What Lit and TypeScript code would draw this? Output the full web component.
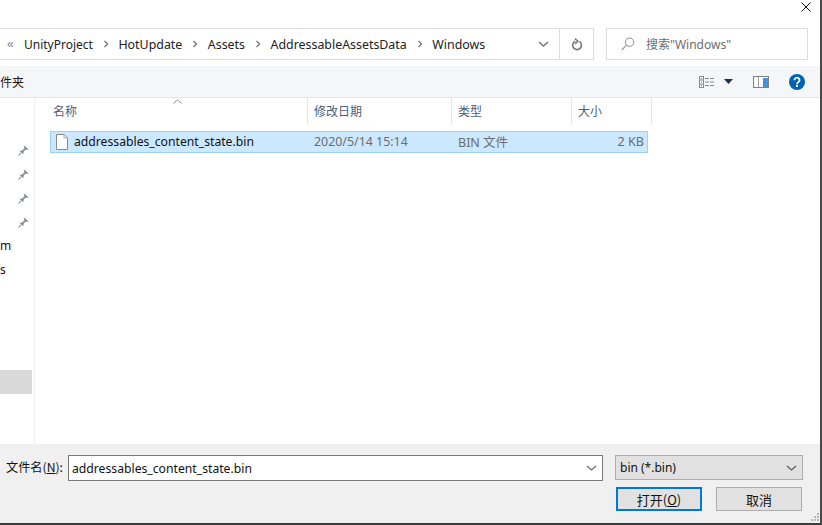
import { LitElement, html, css, svg } from "lit";
import { customElement } from "lit/decorators.js";

const chev = svg`<svg class="crumbsep" width="6" height="8" viewBox="0 0 6 8"><path d="M1.5 1 L4.5 4 L1.5 7" fill="none" stroke="#7f7f7f" stroke-width="1.5"/></svg>`;
const down = (c: string, w = 1.2) => svg`<svg width="11" height="6" viewBox="0 0 11 6"><path d="M1 1 L5.5 5 L10 1" fill="none" stroke="${c}" stroke-width="${w}"/></svg>`;
const pin = svg`<svg width="11" height="11" viewBox="0 0 11 11"><path d="M6.5 0.5 L10.5 4.5 L9.3 5 L7.8 4.6 L5.6 6.8 L5.6 8.6 L4.8 9 L2 6.2 L2.4 5.4 L4.2 5.4 L6.4 3.2 L6 1.7 Z" fill="#8a9096"/><path d="M3.2 7.8 L0.6 10.4" stroke="#8a9096" stroke-width="1.2"/></svg>`;

@customElement("app-root")
export class AppRoot extends LitElement {
  static styles = css`
    :host { display: block; width: 822px; height: 525px; font-family: "Liberation Sans", "Noto Sans CJK SC", sans-serif; font-size: 12px; color: #1a1a1a; background: #fff; overflow: hidden; }
    .win { position: relative; width: 822px; height: 525px; display: flex; flex-direction: column; box-sizing: border-box; border-right: 2px solid #4a4a4a; border-bottom: 2px solid #3a3a3a; }
    .title { height: 28px; flex: none; display: flex; justify-content: flex-end; align-items: flex-start; padding: 2px 9px 0 0; box-sizing: border-box; }
    .addr { height: 32px; flex: none; display: flex; align-items: stretch; }
    .path { width: 560px; box-sizing: border-box; border: 1px solid #dcdcdc; border-left: none; display: flex; align-items: center; padding-left: 7px; color: #222; }
    .path .lt { color: #808080; font-size: 12px; margin-right: 6px; width: 11px; }
    .crumb { white-space: nowrap; font-family: "Noto Sans", sans-serif; font-size: 12.4px; }
    .lt + .crumb { font-size: 12px; }
    .crumbsep { margin: 0 9.75px; flex: none; }
    .pdrop { margin-left: auto; margin-right: 10px; display: flex; }
    .refresh { width: 34px; box-sizing: border-box; border: 1px solid #dcdcdc; border-left: none; display: flex; align-items: center; justify-content: center; }
    .search { margin-left: 12px; width: 202px; box-sizing: border-box; border: 1px solid #dcdcdc; display: flex; align-items: center; padding-left: 14px; font-size: 12px; color: #6d6d6d; gap: 11px; }
    .search span { font-family: "Noto Sans", "Noto Sans CJK SC", sans-serif; white-space: nowrap; }
    .tools { margin-top: 6px; height: 32px; flex: none; background: #f5f6f7; border-bottom: 1px solid #e6e6e6; box-sizing: border-box; display: flex; align-items: center; position: relative; }
    .newf { font-family: "Noto Sans CJK SC", sans-serif; font-size: 12px; margin-left: -12px; margin-top: -1px; white-space: nowrap; }
    .ticons { margin-left: auto; display: flex; align-items: center; margin-right: 15px; }
    .main { flex: 1; display: flex; min-height: 0; }
    .side { width: 35px; flex: none; box-sizing: border-box; border-right: 1px solid #f0f0f0; position: relative; display: flex; flex-direction: column; align-items: flex-end; }
    .pins { display: flex; flex-direction: column; gap: 13px; margin-top: 47px; padding-right: 5px; }
    .pins svg { display: block; }
    .cut { font-family: "Noto Sans", sans-serif; font-size: 12px; align-self: flex-start; height: 24px; line-height: 24px; white-space: nowrap; }
    .cuts { margin-top: 6px; display: flex; flex-direction: column; width: 100%; color: #1a0a20; }
    .hl { position: absolute; left: 0; top: 272px; width: 32px; height: 24px; background: #d9d9d9; }
    .list { flex: 1; display: flex; flex-direction: column; min-width: 0; }
    .heads { display: flex; height: 27px; flex: none; color: #4c607a; font-family: "Noto Sans CJK SC", sans-serif; font-size: 12px; position: relative; }
    .h { box-sizing: border-box; border-right: 1px solid #e5e5e5; padding-left: 6px; line-height: 26px; flex: none; }
    .h.first { width: 273px; padding-left: 18px; }
    .h.date { width: 144px; }
    .h.kind { width: 120px; }
    .h.size { width: 80px; }
    .sort { position: absolute; left: 138px; top: 1px; display: block; }
    .row { margin: 6px 0 0 15px; width: 598px; height: 22px; box-sizing: border-box; border: 1px solid #99d1ff; background: #cce8ff; display: flex; align-items: center; flex: none; padding-bottom: 1px; }
    .name { margin-left: 5px; color: #111; width: 258px; font-family: "Noto Sans", sans-serif; font-size: 12.2px; white-space: nowrap; flex: none; display: flex; gap: 6px; align-items: center; }
    .name svg { flex: none; }
    .c { color: #6d6d6d; font-family: "Noto Sans", "Noto Sans CJK SC", sans-serif; white-space: nowrap; flex: none; }
    .c.date { width: 144px; font-size: 12.4px; }
    .c.kind { width: 120px; font-size: 12.5px; }
    .c.size { width: 66px; font-size: 12.6px; text-align: right; }
    .foot { height: 79px; flex: none; background: #f0f0f0; position: relative; display: grid; grid-template-columns: 68px 535px 1fr; grid-template-rows: 25px 24px; row-gap: 7px; padding: 11px 0 0 0; box-sizing: border-box; }
    .lbl { font-family: "Noto Sans CJK SC", sans-serif; padding-left: 6px; line-height: 25px; font-size: 12.2px; white-space: nowrap; color: #111; }
    u { text-underline-offset: 1px; }
    .input { width: 535px; box-sizing: border-box; height: 26px; border: 1px solid #7a7a7a; background: #fff; display: flex; align-items: center; padding-left: 3px; font-family: "Noto Sans", sans-serif; font-size: 12.2px; color: #111; }
    .input svg { margin-left: auto; margin-right: 5px; }
    .type { margin-left: 12px; width: 188px; height: 25px; box-sizing: border-box; border: 1px solid #adadad; background: #e1e1e1; display: flex; align-items: center; padding-left: 4px; font-family: "Noto Sans", sans-serif; font-size: 12px; color: #111; }
    .type svg { margin-left: auto; margin-right: 5px; }
    .btns { grid-column: 3; display: flex; gap: 14px; margin-left: 13px; }
    .btn { width: 86px; height: 24px; flex: none; box-sizing: border-box; background: #e1e1e1; border: 1px solid #adadad; display: flex; align-items: center; justify-content: center; font-family: "Noto Sans CJK SC", sans-serif; font-size: 13px; color: #111; }
    .btn.def { border: 2px solid #0078d7; }
    .grip { position: absolute; right: 0; bottom: 1px; }
    .sp-view { margin-right: 9px; }
    .sp-caret { margin-right: 20px; }
    .sp-pane { margin-right: 20px; }
  `;

  render() {
    const crumbs = ["UnityProject", "HotUpdate", "Assets", "AddressableAssetsData"];
    return html`<div class="win">
      <div class="title">
        <svg width="10" height="10" viewBox="0 0 10 10"><path d="M0.5 0.5 L9.5 9.5 M9.5 0.5 L0.5 9.5" stroke="#111" stroke-width="1"/></svg>
      </div>
      <div class="addr">
        <div class="path">
          <span class="lt">«</span>
          ${crumbs.map((c) => html`<span class="crumb">${c}</span>${chev}`)}
          <span class="crumb">Windows</span>
          <span class="pdrop">${down("#7a7a7a", 1.6)}</span>
        </div>
        <div class="refresh">
          <svg width="12" height="13" viewBox="0 0 12 13"><path d="M8.2 3.4 A4.4 4.4 0 1 1 4.2 3.2" fill="none" stroke="#7a7a7a" stroke-width="1.6"/><path d="M4 0.6 L6.8 3.3 L4 6" fill="none" stroke="#7a7a7a" stroke-width="1.5"/></svg>
        </div>
        <div class="search">
          <svg width="14" height="14" viewBox="0 0 14 14"><circle cx="8.6" cy="5.2" r="4.2" fill="none" stroke="#8d8d8d" stroke-width="1"/><path d="M5.6 8.2 L0.8 13" stroke="#b58a8a" stroke-width="1.2"/></svg>
          <span>搜索"Windows"</span>
        </div>
      </div>
      <div class="tools">
        <span class="newf">文件夹</span>
        <div class="ticons">
          <svg class="sp-view" width="16" height="12" viewBox="0 0 16 12"><rect x="0.5" y="0.5" width="4" height="11" fill="#fff" stroke="#8a8a8a"/><path d="M1 4 H4 M1 8 H4" stroke="#8a8a8a"/><rect x="2" y="2" width="1" height="1" fill="#5a6a80"/><rect x="2" y="5.5" width="1" height="1" fill="#3f8ad8"/><rect x="2" y="9" width="1" height="1" fill="#d04a3a"/><path d="M6 2.5 H15.5 M6 6 H15.5 M6 9.5 H15.5" stroke="#8a8a8a" stroke-dasharray="4 1"/></svg>
          <svg class="sp-caret" width="9" height="5" viewBox="0 0 9 5"><path d="M0 0 H9 L4.5 5 Z" fill="#1f2f4a"/></svg>
          <svg class="sp-pane" width="16" height="12" viewBox="0 0 16 12"><rect x="0.5" y="0.5" width="15" height="11" fill="#fff" stroke="#808080"/><rect x="10" y="2" width="5" height="9" fill="#3f94e0"/><rect x="5" y="1" width="1" height="10" fill="#a0a0a0"/></svg>
          <svg width="16" height="16" viewBox="0 0 16 16"><circle cx="8" cy="8" r="8" fill="#0063b1"/><path d="M5.5 6.2 A2.5 2.4 0 1 1 9.3 8.1 C8.4 8.7 8 9 8 10.2" fill="none" stroke="#fff" stroke-width="1.7"/><rect x="7" y="11" width="2" height="2" fill="#fff"/></svg>
        </div>
      </div>
      <div class="main">
        <div class="side">
          <div class="pins">${pin}${pin}${pin}${pin}</div>
          <div class="cuts"><span class="cut">m</span><span class="cut">s</span></div>
          <div class="hl"></div>
        </div>
        <div class="list">
          <div class="heads">
            <div class="h first">名称</div>
            <div class="h date">修改日期</div>
            <div class="h kind">类型</div>
            <div class="h size">大小</div>
            <svg class="sort" width="9" height="5" viewBox="0 0 9 5"><path d="M0.5 4.5 L4.5 0.8 L8.5 4.5" fill="none" stroke="#8a8a8a"/></svg>
          </div>
          <div class="row">
            <div class="name">
              <svg width="12" height="16" viewBox="0 0 12 16"><path d="M0.5 0.5 H8 L11.5 4 V15.5 H0.5 Z" fill="#fff" stroke="#8a8a8a"/><path d="M8 0.5 V4 H11.5" fill="none" stroke="#b0b0b0"/></svg>
              <span>addressables_content_state.bin</span>
            </div>
            <span class="c date">2020/5/14 15:14</span>
            <span class="c kind">BIN 文件</span>
            <span class="c size">2 KB</span>
          </div>
        </div>
      </div>
      <div class="foot">
        <span class="lbl">文件名(<u>N</u>):</span>
        <div class="input"><span>addressables_content_state.bin</span>${down("#6d6d6d")}</div>
        <div class="type"><span>bin (*.bin)</span>${down("#5a5a5a")}</div>
        <div class="btns">
          <div class="btn def"><span>打开(<u>O</u>)</span></div>
          <div class="btn">取消</div>
        </div>
        <svg class="grip" width="9" height="9" viewBox="0 0 9 9"><g fill="#b8b8b8"><rect x="6" y="0" width="2" height="2"/><rect x="3" y="3" width="2" height="2"/><rect x="6" y="3" width="2" height="2"/><rect x="0" y="6" width="2" height="2"/><rect x="3" y="6" width="2" height="2"/><rect x="6" y="6" width="2" height="2"/></g></svg>
      </div>
    </div>`;
  }
}
